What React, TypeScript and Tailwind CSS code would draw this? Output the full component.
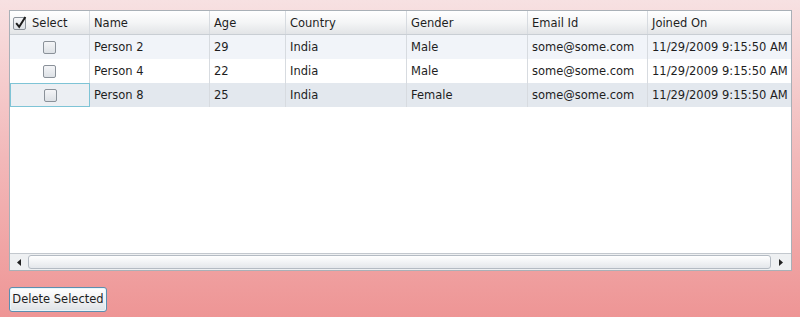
const columns = [
  { key: 'name', label: 'Name', w: 'w-[120px]' },
  { key: 'age', label: 'Age', w: 'w-[76px]' },
  { key: 'country', label: 'Country', w: 'w-[121px]' },
  { key: 'gender', label: 'Gender', w: 'w-[121px]' },
  { key: 'email', label: 'Email Id', w: 'w-[120px]' },
  { key: 'joined', label: 'Joined On', w: 'w-[150px]' },
];

const rows = [
  { name: 'Person 2', age: '29', country: 'India', gender: 'Male', email: 'some@some.com', joined: '11/29/2009 9:15:50 AM', bg: 'bg-[#f1f4f9]' },
  { name: 'Person 4', age: '22', country: 'India', gender: 'Male', email: 'some@some.com', joined: '11/29/2009 9:15:50 AM', bg: 'bg-white' },
  { name: 'Person 8', age: '25', country: 'India', gender: 'Female', email: 'some@some.com', joined: '11/29/2009 9:15:50 AM', bg: 'bg-[#e3e8ee]' },
];

function Checkbox({ checked = false }: { checked?: boolean }) {
  return (
    <span className="relative inline-flex h-[13px] w-[13px] items-center justify-center rounded-[2px] border border-[#8a9199] bg-gradient-to-b from-[#f4f5f7] to-[#dde1e6]">
      {checked && (
        <svg viewBox="0 0 12 12" className="absolute -top-[2px] left-0 h-[13px] w-[13px]">
          <path d="M2 6.5 L4.8 10 L10.5 1" fill="none" stroke="#1b1b1b" strokeWidth="1.8" />
        </svg>
      )}
    </span>
  );
}

export default function App() {
  return (
    <div className="h-[317px] w-[800px] overflow-hidden bg-gradient-to-b from-[#f7e1e2] via-[#f2b8b9] to-[#ee9595] pl-[9px] pr-[8px] pt-[10px] font-['DejaVu_Sans',Verdana,sans-serif] text-[11.5px] text-[#1e1e1e]">
      <div className="flex h-[261px] flex-col overflow-hidden border border-[#a9b0b7] bg-white">
        <div className="flex-1 overflow-hidden">
          <div className="flex h-[24px] w-max border-b border-[#c9ced4] bg-gradient-to-b from-white via-[#f4f5f6] to-[#e2e4e7]">
            <div className="flex w-[80px] items-center gap-[6px] border-r border-[#d7dbe0] pl-[3px] pt-[2px]">
              <Checkbox checked />
              <span className="pt-[1px]">Select</span>
            </div>
            {columns.map((c) => (
              <div key={c.key} className={`${c.w} flex items-center border-r border-[#d7dbe0] pl-[4px] pt-[3px]`}>
                {c.label}
              </div>
            ))}
          </div>
          {rows.map((r, i) => (
            <div key={r.name} className={`flex h-[24px] w-max ${r.bg}`}>
              <div
                className={`flex w-[80px] items-center justify-center border-r ${
                  i === 2 ? 'border border-[#7ec4d6] bg-[#eceff3]' : 'border-[#d7dbe0]'
                }`}
              >
                <Checkbox />
              </div>
              {columns.map((c) => (
                <div key={c.key} className={`${c.w} flex items-center border-r border-[#d7dbe0] pl-[4px] pt-[2px]`}>
                  {r[c.key as keyof typeof r]}
                </div>
              ))}
            </div>
          ))}
        </div>
        <div className="flex h-[17px] items-stretch border-t border-[#c3c8ce] bg-[#eef0f2]">
          <div className="flex w-[18px] items-center justify-center">
            <svg viewBox="0 0 4 7" className="h-[7px] w-[4px]">
              <path d="M4 0 L0 3.5 L4 7 Z" fill="#222" />
            </svg>
          </div>
          <div className="my-[1px] flex-1 rounded-[3px] border border-[#b4bbc3] bg-gradient-to-b from-white to-[#e4e7eb]" />
          <div className="flex w-[20px] items-center justify-center">
            <svg viewBox="0 0 4 7" className="h-[7px] w-[4px]">
              <path d="M0 0 L4 3.5 L0 7 Z" fill="#222" />
            </svg>
          </div>
        </div>
      </div>
      <button className="mt-[16px] h-[25px] w-[98px] rounded-[3px] border border-[#5b8fb0] bg-gradient-to-b from-white via-[#f1f2f4] to-[#dfe2e6] pt-[1px] text-[11.5px] text-[#1e1e1e] shadow-[inset_0_0_0_1px_#e8f6fb]">
        Delete Selected
      </button>
    </div>
  );
}
